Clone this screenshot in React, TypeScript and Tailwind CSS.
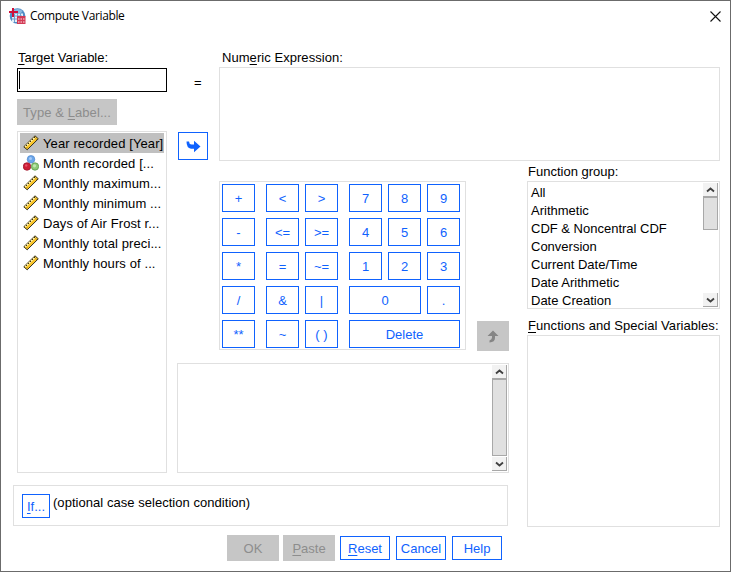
import React from "react";

const variables = [
  "Year recorded [Year]",
  "Month recorded [...",
  "Monthly maximum...",
  "Monthly minimum ...",
  "Days of Air Frost r...",
  "Monthly total preci...",
  "Monthly hours of ...",
];

const groups = [
  "All",
  "Arithmetic",
  "CDF & Noncentral CDF",
  "Conversion",
  "Current Date/Time",
  "Date Arithmetic",
  "Date Creation",
];

function AppIcon() {
  return (
    <svg width="17" height="17" viewBox="0 0 17 17">
      <circle cx="8.500" cy="8" r="7.800" fill="#4f8cc6" />
      <path d="M4 2.500a7 7 0 0 1 9.500.5L12 5H4z" fill="#8ab8e0" />
      <path d="M3 5.500h11V9H8v5H3z" fill="#e4eff9" />
      <path d="M3 8h10M3 11h5M5.500 6v8M8.500 5v4M11.500 5v4" stroke="#6f9fcd" strokeWidth="1" fill="none" />
      <path d="M3 0h2v3h4v2H5v4H3V5H0V3h3z" fill="#d0103a" />
      <path d="M8 8h8.500v8H8z" fill="#d23a55" />
      <path d="M9 10.500h1.500v1H9zM11.500 10.500H13v1h-1.500zM14 10.500h1.500v1H14zM9 13.500h1.500v1H9zM11.500 13.500H13v1h-1.500zM14 13.500h1.500v1H14z" fill="#fbe3e8" />
    </svg>
  );
}

function RulerIcon() {
  return (
    <svg width="16" height="16" viewBox="0 0 16 16">
      <path d="M12 .8L15.300 3.800L4.200 14.800L.8 11.800z" fill="#f9c52a" stroke="#33301f" strokeWidth="1" />
      <path d="M2.200 11.700L12 2.200" stroke="#fff3b0" strokeWidth="1.300" />
      <path d="M3 10l1 1M5 8l1 1M7 6l1 1M9 4l1 1M11 2l1 1" stroke="#33301f" strokeWidth="1" />
      <path d="M4 12.500l.8.800M12.800 3.700l.8.800" stroke="#7d5c08" strokeWidth="1" />
    </svg>
  );
}

function NominalIcon() {
  return (
    <svg width="16" height="16" viewBox="0 0 16 16">
      <circle cx="8" cy="4.300" r="3.800" fill="#6ba6ea" stroke="#4f87cb" strokeWidth=".7" />
      <circle cx="4" cy="11.500" r="3.800" fill="#cc2038" stroke="#9a1228" strokeWidth=".7" />
      <circle cx="12" cy="11.500" r="3.700" fill="#8ecb78" stroke="#4f9140" strokeWidth=".7" />
      <circle cx="7.500" cy="3.500" r="1.500" fill="#a5cbf8" />
      <circle cx="3.200" cy="10.500" r="1.200" fill="#e85068" />
      <circle cx="11.500" cy="10.800" r="1.600" fill="#c0e6b0" />
    </svg>
  );
}

function ScrollArrow({ up = false }: { up?: boolean }) {
  return (
    <div className="flex h-[14px] w-[15px] shrink-0 items-center justify-center border-r border-b border-[#a8a8a8] bg-[#f2f2f2]">
      <svg width="9" height="6" viewBox="0 0 9 6" fill="none" stroke="#404040" strokeWidth="1.800">
        <path d={up ? "M1 4.500l3.500-3L8 4.500" : "M1 1.500l3.500 3L8 1.500"} />
      </svg>
    </div>
  );
}

function Key({ label, className = "" }: { label: string; className?: string }) {
  return (
    <button className={`flex h-7 items-center justify-center border border-[#0f62fe] pt-0.5 text-[#0f62fe] ${className}`}>
      {label}
    </button>
  );
}

function KeyRow({ keys }: { keys: string[] }) {
  return (
    <div className="flex">
      <Key label={keys[0]} className="w-[33px]" />
      <Key label={keys[1]} className="ml-[11px] w-[33px]" />
      <Key label={keys[2]} className="mr-[11px] ml-1.5 w-[33px]" />
      {keys.length === 6 && (
        <>
          <Key label={keys[3]} className="w-[33px]" />
          <Key label={keys[4]} className="ml-1.5 w-[33px]" />
          <Key label={keys[5]} className="ml-1.5 w-[33px]" />
        </>
      )}
      {keys.length === 5 && (
        <>
          <Key label={keys[3]} className="w-[72px]" />
          <Key label={keys[4]} className="ml-1.5 w-[33px]" />
        </>
      )}
      {keys.length === 4 && <Key label={keys[3]} className="w-[111px]" />}
    </div>
  );
}

const U = ({ children }: { children: React.ReactNode }) => (
  <span className="underline underline-offset-2">{children}</span>
);

export default function App() {
  return (
    <div className="flex h-[572px] w-[731px] flex-col overflow-hidden border border-[#6b6b6b] bg-white font-['Liberation_Sans',Arial,sans-serif] text-[13px] leading-4 whitespace-pre text-black">
      <header className="flex h-[30px] shrink-0 items-center pl-2">
        <AppIcon />
        <h1 className="ml-1 grow font-['Open_Sans','Noto_Sans',sans-serif] text-[12px] tracking-[-0.36px]">Compute Variable</h1>
        <svg className="mr-[9px] h-[11px] w-[11px]" viewBox="0 0 11 11" stroke="#111" strokeWidth="1.100">
          <path d="M.5.500l10 10M10.500.500l-10 10" />
        </svg>
      </header>

      <main className="ml-3 grid h-[496px] shrink-0 grid-cols-[154px_342px_211px] grid-rows-[130px_312px_54px]">
        <section className="row-span-2 flex flex-col pt-[19px] pl-1">
          <label className="h-[18px] pl-px"><U>T</U>arget Variable:</label>
          <div className="h-6 border border-black pt-0.5 pl-px">
            <div className="h-[18px] w-px bg-black" />
          </div>
          <button className="mt-[7px] flex h-[26px] w-[100px] items-center justify-center bg-[#c6c6c6] pt-0.5 tracking-[0.08px] text-[#8d8d8d]">
            Type &amp; <U>L</U>abel...
          </button>
          <ul className="mt-1.5 h-[342px] border border-[#e0e0e0] px-0.5 pt-px">
            {variables.map((name, i) => (
              <li key={name} className={`flex h-5 items-center gap-1 pl-[3px] ${i === 0 ? "bg-[#c0c0c0]" : ""}`}>
                {i === 1 ? <NominalIcon /> : <RulerIcon />}
                <span className="pt-0.5 tracking-[0.1px]">{name}</span>
              </li>
            ))}
          </ul>
        </section>

        <section className="col-span-2 flex">
          <div className="flex w-[52px] flex-col pt-11">
            <span className="ml-[27px]">=</span>
            <button className="mt-[41px] ml-[11px] flex h-7 w-[30px] shrink-0 items-center justify-center border border-[#0f62fe]">
              <svg width="15" height="13" viewBox="0 0 15 13" fill="#0f62fe">
                <path d="M.5 1.500H3Q3 4 5.500 4.500H8V.8L14.500 6.500L8 12.200V8.800H5Q.5 8 .5 1.500z" />
              </svg>
            </button>
          </div>
          <div className="flex w-[501px] flex-col pt-[19px]">
            <label className="h-[17px] pl-[3px] tracking-[0.05px]">Num<U>e</U>ric Expression:</label>
            <div className="h-[94px] border border-[#e0e0e0]" />
          </div>
        </section>

        <section className="flex flex-col pt-5 pl-2.5">
          <div className="flex items-end">
            <div className="ml-[42px] flex h-[169px] w-[247px] flex-col gap-1.5 border border-[#e0e0e0] pt-0.5 pl-0.5">
              <KeyRow keys={["+", "<", ">", "7", "8", "9"]} />
              <KeyRow keys={["-", "<=", ">=", "4", "5", "6"]} />
              <KeyRow keys={["*", "=", "~=", "1", "2", "3"]} />
              <KeyRow keys={["/", "&", "|", "0", "."]} />
              <KeyRow keys={["**", "~", "( )", "Delete"]} />
            </div>
            <button className="-mb-px ml-[11px] flex h-[30px] w-8 items-center justify-center bg-[#c6c6c6]">
              <svg width="12" height="13" viewBox="0 0 12 13" fill="#858585">
                <path d="M6 .5l5.500 5.500H8V8q0 4-5.500 4.500v-2Q5 9.500 5 7.500V6H.5z" />
              </svg>
            </button>
          </div>
          <div className="mt-[13px] flex h-[110px] justify-end border border-[#e0e0e0] p-px">
            <div className="flex flex-col">
              <ScrollArrow up />
              <div className="mb-px grow border border-[#a8a8a8] bg-[#e0e0e0]" />
              <ScrollArrow />
            </div>
          </div>
        </section>

        <section className="row-span-2 flex flex-col pt-[3px] pl-[18px]">
          <label className="h-[17px] pl-px">Function <U>g</U>roup:</label>
          <div className="flex h-32 justify-between border border-[#e0e0e0] p-px">
            <ul className="pt-px pl-0.5">
              {groups.map((name) => (
                <li key={name} className="h-[18px] leading-[18px]">{name}</li>
              ))}
            </ul>
            <div className="flex flex-col">
              <ScrollArrow up />
              <div className="h-[33px] border border-[#a8a8a8] bg-[#e0e0e0]" />
              <div className="grow" />
              <ScrollArrow />
            </div>
          </div>
          <label className="mt-[9px] h-[17px] pl-px tracking-[0.07px]"><U>F</U>unctions and Special Variables:</label>
          <div className="h-48 border border-[#e0e0e0]" />
        </section>

        <section className="col-span-2 pt-3">
          <div className="flex h-[41px] w-[495px] border border-[#e0e0e0] pt-2 pl-2">
            <button className="flex h-6 w-7 items-center justify-center border border-[#0f62fe] pt-0.5 text-[#0f62fe]"><U>I</U>f...</button>
            <span className="mt-px ml-[3px] tracking-[0.04px]">(optional case selection condition)</span>
          </div>
        </section>
      </main>

      <footer className="mt-2 flex h-[26px] items-center pl-[226px]">
        <button className="h-[26px] w-[52px] bg-[#c6c6c6] pt-0.5 text-[#8d8d8d]">OK</button>
        <button className="ml-1 h-[26px] w-[52px] bg-[#c6c6c6] pt-0.5 text-[#8d8d8d]"><U>P</U>aste</button>
        <button className="ml-[5px] h-6 w-[50px] border border-[#0f62fe] pt-0.5 text-[#0f62fe]"><U>R</U>eset</button>
        <button className="ml-1.5 h-6 w-[50px] border border-[#0f62fe] pt-0.5 text-[#0f62fe]">Cancel</button>
        <button className="ml-1.5 h-6 w-[50px] border border-[#0f62fe] pt-0.5 text-[#0f62fe]">Help</button>
      </footer>
    </div>
  );
}
